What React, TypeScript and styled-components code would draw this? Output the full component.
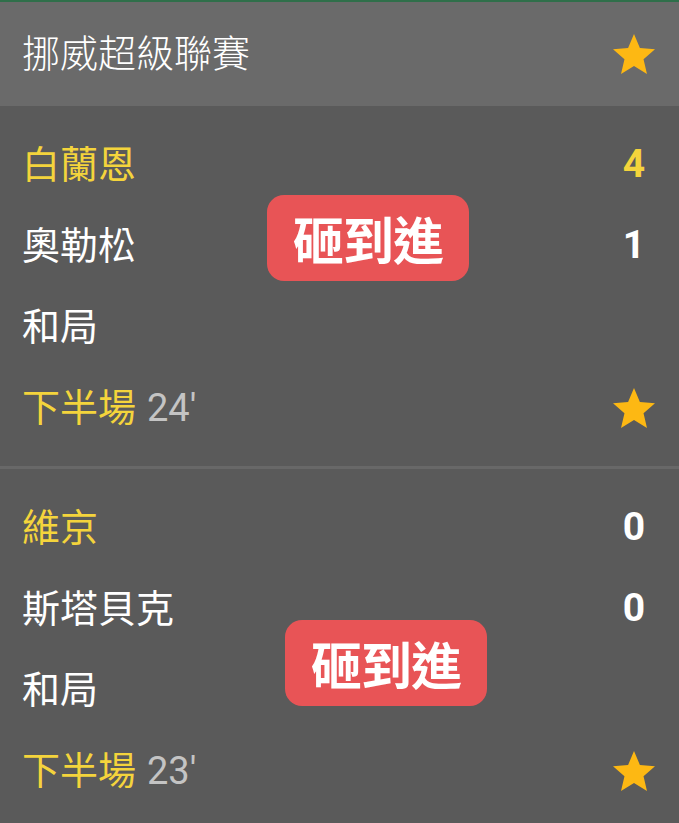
import * as React from 'react'
import styled, { createGlobalStyle } from 'styled-components'

const GlobalStyle = createGlobalStyle`
  html, body {
    margin: 0;
    padding: 0;
    background: #5a5a5a;
  }
  body {
    font-family: Roboto, "Noto Sans CJK TC", "Noto Sans", sans-serif;
  }
`

const Page = styled.div`
  width: 679px;
  min-height: 823px;
  background: #5a5a5a;
  border-top: 2px solid #2f6f4a;
`

const Header = styled.div`
  height: 104px;
  background: #6a6a6a;
  display: flex;
  align-items: center;
  justify-content: space-between;
  padding: 0 24px 0 22px;
`

const LeagueTitle = styled.div`
  color: #ffffff;
  font-size: 38px;
  font-weight: 300;
  line-height: 1;
`

const Block = styled.div<{ last?: boolean }>`
  position: relative;
  padding: 18px 24px 18px 22px;
  border-bottom: ${p => (p.last ? 'none' : '3px solid #686868')};
`

const Row = styled.div`
  height: 81px;
  display: flex;
  align-items: center;
  justify-content: space-between;
`

const Label = styled.div<{ highlight?: boolean }>`
  color: ${p => (p.highlight ? '#f4d43c' : '#ffffff')};
  font-size: 38px;
  font-weight: 400;
  line-height: 1;
`

const Minute = styled.span`
  color: #c4c4c4;
  margin-left: 11px;
`

const Score = styled.div<{ highlight?: boolean }>`
  width: 42px;
  text-align: center;
  color: ${p => (p.highlight ? '#f4d43c' : '#ffffff')};
  font-size: 39px;
  font-weight: 700;
  line-height: 1;
`

const Badge = styled.div<{ top: number; left: number }>`
  position: absolute;
  top: ${p => p.top}px;
  left: ${p => p.left}px;
  width: 202px;
  height: 86px;
  border-radius: 17px;
  background: #e85456;
  color: #ffffff;
  font-size: 51px;
  font-weight: 700;
  display: flex;
  align-items: center;
  justify-content: center;
  letter-spacing: -1px;
`

const StarIcon = () => (
  <svg width="42" height="40" viewBox="2 2 20 19">
    <path
      fill="#fdb813"
      d="M12 17.27L18.18 21l-1.64-7.03L22 9.24l-7.19-.61L12 2 9.19 8.63 2 9.24l5.46 4.73L5.82 21z"
    />
  </svg>
)

interface Match {
  home: string
  away: string
  homeScore: number
  awayScore: number
  result: string
  period: string
  minute: string
  badge: { top: number; left: number }
}

const matches: Match[] = [
  {
    home: '白蘭恩',
    away: '奧勒松',
    homeScore: 4,
    awayScore: 1,
    result: '和局',
    period: '下半場',
    minute: "24'",
    badge: { top: 89, left: 267 },
  },
  {
    home: '維京',
    away: '斯塔貝克',
    homeScore: 0,
    awayScore: 0,
    result: '和局',
    period: '下半場',
    minute: "23'",
    badge: { top: 151, left: 285 },
  },
]

export default function App() {
  return (
    <Page>
      <GlobalStyle />
      <Header>
        <LeagueTitle>挪威超級聯賽</LeagueTitle>
        <StarIcon />
      </Header>
      {matches.map((m, i) => (
        <Block key={m.home} last={i === matches.length - 1}>
          <Row>
            <Label highlight>{m.home}</Label>
            <Score highlight={m.homeScore > m.awayScore}>{m.homeScore}</Score>
          </Row>
          <Row>
            <Label>{m.away}</Label>
            <Score highlight={m.awayScore > m.homeScore}>{m.awayScore}</Score>
          </Row>
          <Row>
            <Label>{m.result}</Label>
          </Row>
          <Row>
            <Label highlight>
              {m.period}
              <Minute>{m.minute}</Minute>
            </Label>
            <StarIcon />
          </Row>
          <Badge top={m.badge.top} left={m.badge.left}>砸到進</Badge>
        </Block>
      ))}
    </Page>
  )
}
